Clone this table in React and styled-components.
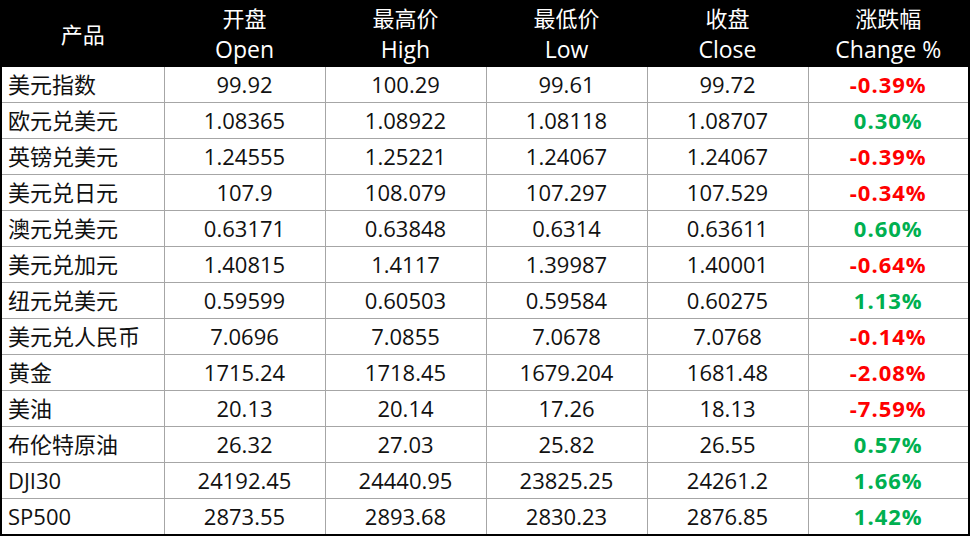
import React from "react";
import styled, { createGlobalStyle } from "styled-components";

const GlobalStyle = createGlobalStyle`
  html, body {
    margin: 0;
    padding: 0;
    background: #ffffff;
  }
  body {
    font-family: "Open Sans", "Noto Sans CJK SC", sans-serif;
  }
`;

const rows = [
  ["美元指数", "99.92", "100.29", "99.61", "99.72", "-0.39%"],
  ["欧元兑美元", "1.08365", "1.08922", "1.08118", "1.08707", "0.30%"],
  ["英镑兑美元", "1.24555", "1.25221", "1.24067", "1.24067", "-0.39%"],
  ["美元兑日元", "107.9", "108.079", "107.297", "107.529", "-0.34%"],
  ["澳元兑美元", "0.63171", "0.63848", "0.6314", "0.63611", "0.60%"],
  ["美元兑加元", "1.40815", "1.4117", "1.39987", "1.40001", "-0.64%"],
  ["纽元兑美元", "0.59599", "0.60503", "0.59584", "0.60275", "1.13%"],
  ["美元兑人民币", "7.0696", "7.0855", "7.0678", "7.0768", "-0.14%"],
  ["黄金", "1715.24", "1718.45", "1679.204", "1681.48", "-2.08%"],
  ["美油", "20.13", "20.14", "17.26", "18.13", "-7.59%"],
  ["布伦特原油", "26.32", "27.03", "25.82", "26.55", "0.57%"],
  ["DJI30", "24192.45", "24440.95", "23825.25", "24261.2", "1.66%"],
  ["SP500", "2873.55", "2893.68", "2830.23", "2876.85", "1.42%"],
];

const headers = [
  ["开盘", "Open"],
  ["最高价", "High"],
  ["最低价", "Low"],
  ["收盘", "Close"],
  ["涨跌幅", "Change %"],
];

const App = () => {
  return (
    <>
      <GlobalStyle />
      <Table>
        <colgroup>
          <Col $w={163} />
          {headers.map(([, en]) => (
            <Col key={en} $w={161} />
          ))}
        </colgroup>
        <thead>
          <tr>
            <HeadCell>产品</HeadCell>
            {headers.map(([cn, en]) => (
              <HeadCell key={en}>
                <HeadLine>{cn}</HeadLine>
                <HeadLine $latin>{en}</HeadLine>
              </HeadCell>
            ))}
          </tr>
        </thead>
        <tbody>
          {rows.map((r) => (
            <tr key={r[0]}>
              <NameCell>{r[0]}</NameCell>
              <NumCell>{r[1]}</NumCell>
              <NumCell>{r[2]}</NumCell>
              <NumCell>{r[3]}</NumCell>
              <NumCell>{r[4]}</NumCell>
              <ChangeCell $down={r[5].startsWith("-")}>{r[5]}</ChangeCell>
            </tr>
          ))}
        </tbody>
      </Table>
    </>
  );
};

const Table = styled.table`
  border-collapse: collapse;
  table-layout: fixed;
  width: 969px;
  border: 2px solid #000000;
  font-size: 22px;
  color: #111111;
`;

const Col = styled.col`
  width: ${(p) => p.$w}px;
`;

const HeadCell = styled.th`
  background: #000000;
  color: #ffffff;
  height: 64px;
  padding: 0;
  font-weight: 400;
  line-height: 32px;
  text-align: center;
  vertical-align: middle;
  border: 1px solid #000000;
`;

const HeadLine = styled.div`
  height: 32px;
  font-size: ${(p) => (p.$latin ? "23px" : "22px")};
  line-height: ${(p) => (p.$latin ? "30px" : "32px")};
`;

const BodyCell = styled.td`
  height: 35px;
  padding: 0;
  border: 1px solid #a6a6a6;
  line-height: 35px;
  white-space: nowrap;
`;

const NameCell = styled(BodyCell)`
  text-align: left;
  padding-left: 6px;
`;

const NumCell = styled(BodyCell)`
  text-align: center;
`;

const ChangeCell = styled(BodyCell)`
  text-align: center;
  font-weight: 700;
  letter-spacing: 1px;
  color: ${(p) => (p.$down ? "#ff0000" : "#00b050")};
`;

export default App;
